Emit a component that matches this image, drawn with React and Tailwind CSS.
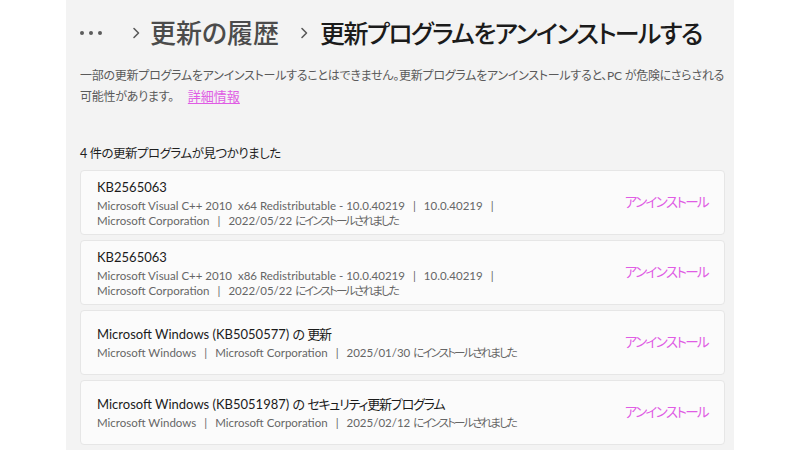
import React from 'react';

const updates = [
  {
    title: 'KB2565063',
    lines: [
      ['Microsoft Visual C++ 2010  x64 Redistributable - 10.0.40219', '10.0.40219', ''],
      ['Microsoft Corporation', '2022/05/22 にインストールされました'],
    ],
  },
  {
    title: 'KB2565063',
    lines: [
      ['Microsoft Visual C++ 2010  x86 Redistributable - 10.0.40219', '10.0.40219', ''],
      ['Microsoft Corporation', '2022/05/22 にインストールされました'],
    ],
  },
  {
    title: 'Microsoft Windows (KB5050577) の 更新',
    lines: [['Microsoft Windows', 'Microsoft Corporation', '2025/01/30 にインストールされました']],
  },
  {
    title: 'Microsoft Windows (KB5051987) の セキュリティ更新プログラム',
    lines: [['Microsoft Windows', 'Microsoft Corporation', '2025/02/12 にインストールされました']],
  },
];

// split text into latin / japanese runs so the japanese can be set tighter
const Runs = ({ text, jpClass }) => {
  const parts = text.split(/([\u3000-\u30ff\u4e00-\u9fff]+)/).filter(Boolean);
  return parts.map((p, i) =>
    /[\u3000-\u30ff\u4e00-\u9fff]/.test(p) ? (
      <span key={i} className={jpClass}>{p}</span>
    ) : (
      <span key={i}>{p}</span>
    )
  );
};

const Chevron = () => (
  <svg width="12" height="14" viewBox="0 0 12 14" className="shrink-0 text-[#5a5a5a]">
    <path d="M4 2.5 L8.5 7 L4 11.5" fill="none" stroke="currentColor" strokeWidth="1.6" strokeLinecap="round" strokeLinejoin="round" />
  </svg>
);

const App = () => {
  return (
    <div className="w-[800px] h-[450px] bg-white overflow-hidden font-['Lato','Noto_Sans_CJK_JP',sans-serif] [font-feature-settings:'palt']">
      <div className="ml-[66px] w-[668px] h-[450px] bg-[#f3f3f3] pl-[14px] pt-[15px]">

        {/* Breadcrumb */}
        <div className="flex items-center h-[36px] whitespace-nowrap">
          <div className="flex gap-[5px] items-center w-[24px] mr-[26px]">
            <span className="w-[4px] h-[4px] rounded-full bg-[#5c5c5c]"></span>
            <span className="w-[4px] h-[4px] rounded-full bg-[#5c5c5c]"></span>
            <span className="w-[4px] h-[4px] rounded-full bg-[#5c5c5c]"></span>
          </div>
          <Chevron />
          <span className="ml-[8px] mr-[19px] text-[26px] leading-[36px] font-medium text-[#4b4b4b]">更新の履歴</span>
          <Chevron />
          <span className="ml-[10px] text-[25px] leading-[36px] font-medium tracking-[-1.6px] text-[#1b1b1b]">更新プログラムをアンインストールする</span>
        </div>

        {/* Description */}
        <p className="mt-[15px] text-[12px] leading-[20px] tracking-[-0.25px] text-[#5a5a5a] whitespace-nowrap">
          一部の更新プログラムをアンインストールすることはできません。更新プログラムをアンインストールすると、PC が危険にさらされる
          <br />
          可能性があります。
          <a className="ml-[14px] text-[13px] tracking-[0px] text-[#e05ce4] underline underline-offset-2">詳細情報</a>
        </p>

        <div className="mt-[37px] text-[12.5px] leading-[20px] tracking-[-0.5px] text-[#1f1f1f]">4 件の更新プログラムが見つかりました</div>

        {/* List */}
        <div className="mt-[6px] w-[645px] flex flex-col gap-[5px]">
          {updates.map((u, i) => (
            <div
              key={i}
              className="h-[65px] flex items-center justify-between bg-[#fbfbfb] border border-[#e6e6e6] rounded-[4px] pl-[16px] pr-[16px]"
            >
              <div className="flex flex-col">
                <div className="text-[13px] leading-[18px] text-[#1b1b1b] whitespace-pre">
                  <Runs text={u.title} jpClass="tracking-[-1.2px]" />
                </div>
                <div className="mt-[2px]">
                  {u.lines.map((segs, j) => (
                    <div key={j} className="flex text-[11.5px] leading-[15px] text-[#666666] whitespace-pre">
                      {segs.map((s, k) => (
                        <React.Fragment key={k}>
                          {k > 0 && <span className="mx-[8px]">|</span>}
                          <span><Runs text={s} jpClass="tracking-[-1.9px]" /></span>
                        </React.Fragment>
                      ))}
                    </div>
                  ))}
                </div>
              </div>
              <button className="text-[13.5px] tracking-[-1.6px] text-[#e05ce4] whitespace-nowrap">アンインストール</button>
            </div>
          ))}
        </div>
      </div>
    </div>
  );
};

export default App;
